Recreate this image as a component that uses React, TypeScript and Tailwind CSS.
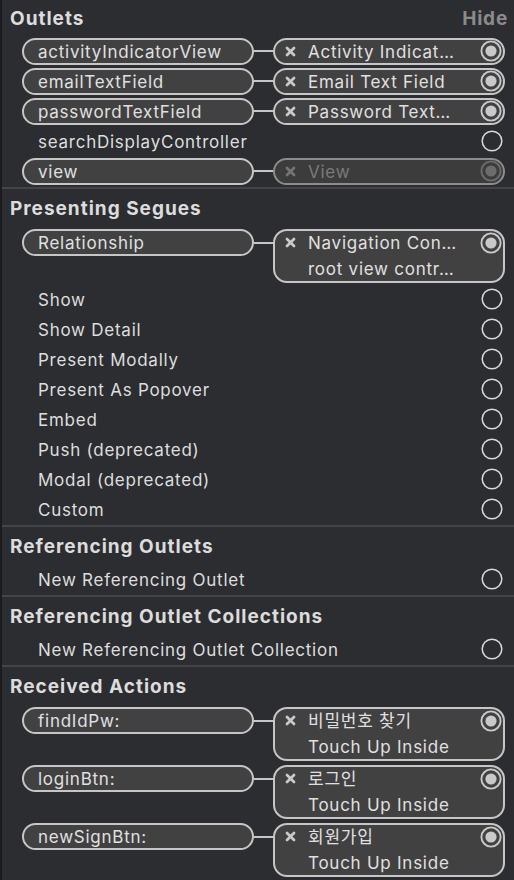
import React from "react";

type CState = "empty" | "filled" | "dim";

function Ring({ state }: { state: CState }) {
  if (state === "empty") {
    return (
      <svg width="22" height="22" viewBox="0 0 22 22" className="shrink-0">
        <circle cx="11" cy="11" r="9.8" fill="none" stroke="#d9d9d9" strokeWidth="1.5" />
      </svg>
    );
  }
  const c = state === "dim" ? "#6c6c6c" : "#c9c9c9";
  return (
    <svg width="22" height="22" viewBox="0 0 22 22" className="shrink-0">
      <circle cx="11" cy="11" r="9.6" fill="none" stroke={c} strokeWidth="1.9" />
      <circle cx="11" cy="11" r="5.6" fill={c} />
    </svg>
  );
}

function XMark({ dim }: { dim?: boolean }) {
  const c = dim ? "#747474" : "#c9c9c9";
  return (
    <svg width="11" height="11" viewBox="0 0 11 11" className="shrink-0">
      <path d="M2 2 L9 9 M9 2 L2 9" stroke={c} strokeWidth="2.8" strokeLinecap="round" />
    </svg>
  );
}

function Header({ title, hide }: { title: string; hide?: boolean }) {
  return (
    <div className="h-[36px] flex items-center justify-between pl-[8px] pr-[6px]">
      <span className="pt-[3px] text-[19px] font-bold text-[#dcdcdc] tracking-[1px]">{title}</span>
      {hide && <span className="pt-[3px] text-[19px] font-bold text-[#8b8b8b] tracking-[0.8px]">Hide</span>}
    </div>
  );
}

function Sep() {
  return (
    <div className="h-[4px] flex flex-col justify-center">
      <div className="h-[2px] bg-[#434447]" />
    </div>
  );
}

function PlainRow({ label }: { label: string }) {
  return (
    <div className="h-[30px] flex items-center justify-between pl-[36px] pr-[11px]">
      <span className="pt-[3px] text-[17px] tracking-[0.75px] text-[#dedede]">{label}</span>
      <Ring state="empty" />
    </div>
  );
}

function LeftPill({ label }: { label: string }) {
  return (
    <div className="w-[232px] h-[27px] shrink-0 rounded-[14px] border-2 border-[#c6c6c6] bg-[#414141] flex items-center pl-[14px]">
      <span className="pt-[3px] text-[17px] tracking-[0.75px] text-[#e0e0e0] whitespace-nowrap">{label}</span>
    </div>
  );
}

function Connector() {
  return (
    <div className="w-[19px] h-[27px] shrink-0 flex items-center">
      <div className="w-full h-[2px] bg-[#c6c6c6]" />
    </div>
  );
}

function OutletRow({ left, right, dim }: { left: string; right: string; dim?: boolean }) {
  return (
    <div className="h-[30px] flex items-center pl-[20px]">
      <LeftPill label={left} />
      <Connector />
      <div
        className={
          dim
            ? "w-[232px] h-[27px] shrink-0 rounded-[14px] border-2 border-[#8c8c8c] bg-[#3c3c3c] flex items-center pl-[10px] pr-[1px]"
            : "w-[232px] h-[27px] shrink-0 rounded-[14px] border-2 border-[#c6c6c6] bg-[#414141] flex items-center pl-[10px] pr-[1px]"
        }
      >
        <XMark dim={dim} />
        <span
          className={
            dim
              ? "pt-[3px] ml-[12px] flex-1 text-[17px] tracking-[0.75px] text-[#7a7a7a] whitespace-nowrap overflow-hidden"
              : "pt-[3px] ml-[12px] flex-1 text-[17px] tracking-[0.75px] text-[#e0e0e0] whitespace-nowrap overflow-hidden"
          }
        >
          {right}
        </span>
        <Ring state={dim ? "dim" : "filled"} />
      </div>
    </div>
  );
}

function DoubleRow({ left, line1, line2 }: { left: string; line1: string; line2: string }) {
  return (
    <div className="h-[58px] flex items-start pt-[3px] pl-[20px]">
      <LeftPill label={left} />
      <Connector />
      <div className="w-[232px] h-[54px] shrink-0 rounded-[14px] border-2 border-[#c6c6c6] bg-[#414141] flex flex-col pl-[10px] pr-[1px]">
        <div className="h-[23px] flex items-center">
          <XMark />
          <span className="pt-[3px] ml-[12px] flex-1 text-[17px] tracking-[0.75px] text-[#e0e0e0] whitespace-nowrap overflow-hidden">{line1}</span>
          <Ring state="filled" />
        </div>
        <div className="h-[28px] flex items-center pl-[23px]">
          <span className="pt-[3px] text-[17px] tracking-[0.75px] text-[#e0e0e0] whitespace-nowrap">{line2}</span>
        </div>
      </div>
    </div>
  );
}

export default function App() {
  return (
    <div className="w-[514px] h-[880px] overflow-hidden bg-[#2c2d30] border-l-2 border-[#1b1b1d] font-['Inter','Noto_Sans_CJK_KR',sans-serif] antialiased">
      <Header title="Outlets" hide />
      <OutletRow left="activityIndicatorView" right="Activity Indicat…" />
      <OutletRow left="emailTextField" right="Email Text Field" />
      <OutletRow left="passwordTextField" right="Password Text…" />
      <PlainRow label="searchDisplayController" />
      <OutletRow left="view" right="View" dim />
      <Sep />
      <Header title="Presenting Segues" />
      <DoubleRow left="Relationship" line1="Navigation Con…" line2="root view contr…" />
      <PlainRow label="Show" />
      <PlainRow label="Show Detail" />
      <PlainRow label="Present Modally" />
      <PlainRow label="Present As Popover" />
      <PlainRow label="Embed" />
      <PlainRow label="Push (deprecated)" />
      <PlainRow label="Modal (deprecated)" />
      <PlainRow label="Custom" />
      <Sep />
      <Header title="Referencing Outlets" />
      <PlainRow label="New Referencing Outlet" />
      <Sep />
      <Header title="Referencing Outlet Collections" />
      <PlainRow label="New Referencing Outlet Collection" />
      <Sep />
      <Header title="Received Actions" />
      <DoubleRow left="findIdPw:" line1="비밀번호 찾기" line2="Touch Up Inside" />
      <DoubleRow left="loginBtn:" line1="로그인" line2="Touch Up Inside" />
      <DoubleRow left="newSignBtn:" line1="회원가입" line2="Touch Up Inside" />
    </div>
  );
}
